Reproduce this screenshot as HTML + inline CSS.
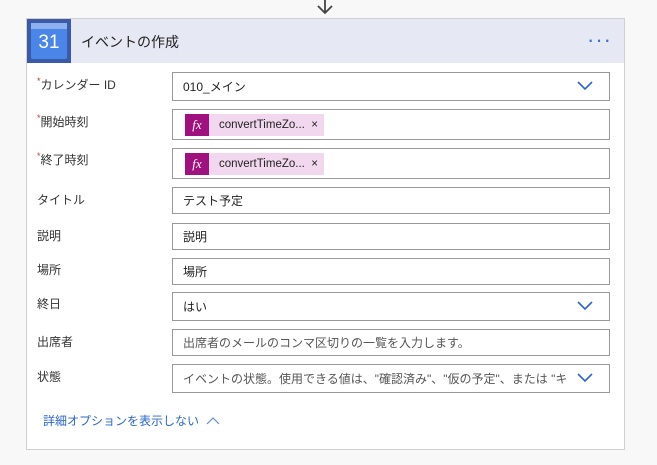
<!DOCTYPE html><html><head><style>
body{margin:0;width:657px;height:465px;background:#f8f8f8;font-family:"Liberation Sans","Noto Sans CJK JP",sans-serif;position:relative;overflow:hidden}
.card{position:absolute;left:26px;top:18px;width:599px;height:432px;background:#fff;border:1px solid #d0d0d0;box-sizing:border-box}
.hd{position:absolute;left:0;top:0;right:0;height:44px;background:#e6e8f3}
.ic{position:absolute;left:0;top:0;width:44px;height:44px;background:#3b5ba8}
.ic .in{position:absolute;left:4px;top:4px;width:36px;height:36px;background:#4a86e8;border-radius:2px}
.ic .bar{position:absolute;left:4px;top:4px;width:36px;height:6px;background:#8fb0ee}
.ic span{position:absolute;left:0;top:13px;width:44px;text-align:center;color:#fff;font-size:19px}
.ttl{position:absolute;left:54px;top:13px;font-size:14px;color:#222;font-weight:normal}
.dots{position:absolute;right:12px;top:8px;color:#3b6fd0;font-size:22px;letter-spacing:1px}
.lb{position:absolute;left:37px;font-size:12px;color:#333}
.lb b{color:#c0392b;font-weight:normal;font-size:9px;vertical-align:top}
.f{position:absolute;left:172px;width:438px;border:1px solid #999;box-sizing:border-box;font-size:12px;color:#222;padding-left:10px;display:flex;align-items:center}
.ph{color:#555}
.chev{position:absolute;right:16px;top:50%;margin-top:-6px}
.tok{display:flex;align-items:center;height:22px;background:#f2d8ee;margin-left:2px;font-size:11.5px}
.fx{width:24px;height:22px;background:#a0107e;color:#fff;font-family:"Liberation Serif",serif;font-style:italic;font-size:13px;text-align:center;line-height:22px;margin-right:10px}
.arr{position:absolute;left:315px;top:-2px}
</style></head><body>
<svg class="arr" width="20" height="18"><path d="M10 0V15M3 8L10 15L17 8" stroke="#444" stroke-width="1.8" fill="none"/></svg>
<div class="card">
<div class="hd"><div class="ic"><div class="in"></div><div class="bar"></div><span>31</span></div><div class="ttl">イベントの作成</div><div class="dots">···</div></div>
</div>
<div class="lb" style="top:76px"><b>*</b>カレンダー ID</div>
<div class="f" style="top:72px;height:29px">010_メイン<svg class="chev" width="16" height="10"><path d="M1 1L8 8L15 1" stroke="#2b66c8" stroke-width="1.6" fill="none"/></svg></div>
<div class="lb" style="top:113px"><b>*</b>開始時刻</div>
<div class="f" style="top:109px;height:31px;padding-left:10px"><div class="tok"><div class="fx">fx</div>convertTimeZo...&nbsp;&nbsp;×&nbsp;&nbsp;</div></div>
<div class="lb" style="top:151px"><b>*</b>終了時刻</div>
<div class="f" style="top:148px;height:31px;padding-left:10px"><div class="tok"><div class="fx">fx</div>convertTimeZo...&nbsp;&nbsp;×&nbsp;&nbsp;</div></div>
<div class="lb" style="top:191px">タイトル</div>
<div class="f" style="top:187px;height:27px">テスト予定</div>
<div class="lb" style="top:227px">説明</div>
<div class="f" style="top:223px;height:27px">説明</div>
<div class="lb" style="top:261px">場所</div>
<div class="f" style="top:258px;height:27px">場所</div>
<div class="lb" style="top:295px">終日</div>
<div class="f" style="top:292px;height:29px">はい<svg class="chev" width="16" height="10"><path d="M1 1L8 8L15 1" stroke="#2b66c8" stroke-width="1.6" fill="none"/></svg></div>
<div class="lb" style="top:333px">出席者</div>
<div class="f ph" style="top:329px;height:27px">出席者のメールのコンマ区切りの一覧を入力します。</div>
<div class="lb" style="top:368px">状態</div>
<div class="f ph" style="top:364px;height:29px">イベントの状態。使用できる値は、"確認済み"、"仮の予定"、または "キ<svg class="chev" width="16" height="10"><path d="M1 1L8 8L15 1" stroke="#2b66c8" stroke-width="1.6" fill="none"/></svg></div>
<div style="position:absolute;left:43px;top:412px;font-size:12px;color:#2b66c8">詳細オプションを表示しない <svg width="14" height="8" style="margin-left:4px"><path d="M1 7L7 1L13 7" stroke="#6a8fd0" stroke-width="1.2" fill="none"/></svg></div>
</body></html>
